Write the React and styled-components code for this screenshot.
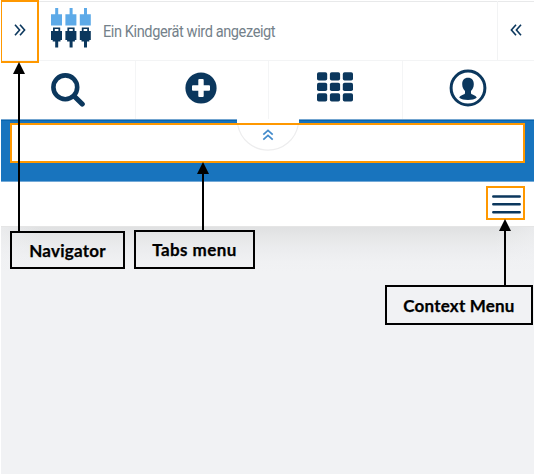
import React from "react";
import styled, { createGlobalStyle } from "styled-components";

const NAVY = "#0b375d";
const ORANGE = "#ff9800";

const GlobalStyle = createGlobalStyle`
  *, *::before, *::after { box-sizing: border-box; }
  body { margin: 0; background: #f1f2f4; }
  svg { display: block; flex: none; }
`;

const Screen = styled.main`
  position: relative;
  width: 534px;
  height: 474px;
  overflow: hidden;
  background: #f1f2f4;
  border-left: 1px solid #fff;
  display: flex;
  flex-direction: column;
`;

const Header = styled.header`
  height: 60px;
  flex: none;
  display: flex;
  align-items: stretch;
  background: #fff;
  border-top: 1px solid #fff;
  box-shadow: inset 0 1px #e8e9ea;
`;

const SideToggle = styled.button`
  width: ${(p) => p.$width}px;
  padding: 0 0 ${(p) => p.$lift || 0}px;
  border: 0;
  border-left: ${(p) => (p.$divided ? "1px solid #f2f3f4" : "0")};
  background: transparent;
  display: flex;
  align-items: center;
  justify-content: center;
`;

const Device = styled.div`
  flex: 1;
  display: flex;
  align-items: center;
  padding: 0 0 5px 12px;
  gap: 12px;
`;

const DeviceTitle = styled.span`
  font: 400 16px/20px Roboto, sans-serif;
  letter-spacing: -0.45px;
  color: #74818a;
  white-space: nowrap;
  padding-top: 8px;
  transform: scaleX(0.911);
  transform-origin: left;
`;

const Toolbar = styled.nav`
  height: 59px;
  flex: none;
  display: grid;
  grid-template-columns: 135px 133px 134px 1fr;
  background: #fff;
  border-top: 1px solid #f3f4f5;
`;

const Tool = styled.button`
  border: 0;
  border-right: ${(p) => (p.$last ? "0" : "1px solid #f4f5f6")};
  padding: 0 ${(p) => p.$shift || 0}px ${(p) => p.$lift || 0}px 0;
  background: transparent;
  display: flex;
  align-items: center;
  justify-content: center;
`;

const TabsBand = styled.section`
  height: 63px;
  flex: none;
  position: relative;
  padding: 3px 9px 0;
  background: #1874be;
  border-top: 1px solid #73a5d0;
  border-bottom: 1px solid #73a9d7;
  box-shadow: inset 0 1px #0965ae;
`;

const TabsPanel = styled.div`
  height: 40px;
  width: 515px;
  border: 2px solid ${ORANGE};
  background: #fff;
`;

const Collapse = styled.div`
  position: absolute;
  left: 236px;
  top: -1px;
  width: 62px;
  height: 33px;
`;

const ContextBar = styled.section`
  height: 44px;
  flex: none;
  display: flex;
  justify-content: flex-end;
  padding: 4px 9px 0 0;
  background: #fff;
`;

const MenuButton = styled.button`
  width: 39px;
  height: 34px;
  border: 2px solid ${ORANGE};
  background: #fff;
  padding: 0 0 0 4px;
  display: flex;
  align-items: flex-start;

  svg { margin-top: 6px; }
`;

const Content = styled.section`
  flex: 1;
  background:
    linear-gradient(90deg, rgba(241, 242, 244, 0.55), rgba(241, 242, 244, 0) 40px, rgba(241, 242, 244, 0) 493px, rgba(241, 242, 244, 0.55)),
    linear-gradient(#dfe0e1 0, #e5e6e7 10px, #ebecee 22px, #f0f1f3 36px, #f1f2f4 46px);
  box-shadow: inset 0 1px #e5e5e5;
`;

const NavigatorFrame = styled.div`
  position: absolute;
  left: -1px;
  top: 0;
  width: 39px;
  height: 63px;
  border: 2px solid ${ORANGE};
`;

const Annotation = styled.div`
  position: absolute;
  left: ${(p) => p.$x - 1}px;
  top: ${(p) => p.$y}px;
  width: ${(p) => p.$w}px;
  height: ${(p) => p.$h}px;
  border: 2px solid #000;
  display: flex;
  align-items: center;
  justify-content: center;
  padding-top: 1px;
  font: 700 17px/20px Lato, sans-serif;
  letter-spacing: ${(p) => p.$tracking || 0}px;
  -webkit-text-stroke: 0.25px #000;
  color: #000;
  white-space: nowrap;
`;

const Arrow = styled.svg`
  position: absolute;
  left: ${(p) => p.$x - 7}px;
  top: ${(p) => p.$y}px;
`;

function Pointer({ x, y, length }) {
  return (
    <Arrow $x={x} $y={y} width="12" height={length} viewBox={`0 0 12 ${length}`}>
      <path d="M6 0L12 12H0Z" />
      <path d={`M6 10V${length}`} stroke="#000" strokeWidth="2" />
    </Arrow>
  );
}

function Chevrons({ flip }) {
  return (
    <svg width="12" height="12" viewBox="0 0 12 12" fill="none" stroke={NAVY} strokeWidth="1.6">
      <g transform={flip ? "translate(12 0) scale(-1 1)" : undefined}>
        <path d="M1 .7L5.6 6L1 11.3M6 .7L10.6 6L6 11.3" />
      </g>
    </svg>
  );
}

function PlugsIcon() {
  return (
    <svg width="40" height="40" viewBox="0 0 40 40">
      {[0, 14.4, 28.8].map((x) => (
        <g key={x} transform={`translate(${x} 0)`}>
          <path d="M4.2 0h3v6.2H11V17.5H0V6.2h4.2z" fill="#5daae8" />
          <path
            d="M2 19.5h7.2V23H11v9H9.5v1.5H7.2V39.5h-3V33.5H1.7V32H0v-9h2zM3.8 21v2h3.6v-2z"
            fill={NAVY}
            fillRule="evenodd"
          />
        </g>
      ))}
    </svg>
  );
}

export default function App() {
  return (
    <>
      <GlobalStyle />
      <Screen>
        <Header>
          <SideToggle $width={38} $lift={2} aria-label="Navigator">
            <Chevrons />
          </SideToggle>
          <Device>
            <PlugsIcon />
            <DeviceTitle>Ein Kindgerät wird angezeigt</DeviceTitle>
          </Device>
          <SideToggle $width={37} $lift={2} $divided aria-label="Details">
            <Chevrons flip />
          </SideToggle>
        </Header>

        <Toolbar>
          <Tool $lift={1} aria-label="Search">
            <svg width="34" height="34" viewBox="0 0 34 34" fill="none" stroke={NAVY}>
              <circle cx="14.3" cy="14.3" r="11.9" strokeWidth="4.6" />
              <path d="M23.5 23.5L31.2 31" strokeWidth="5.2" strokeLinecap="round" />
            </svg>
          </Tool>
          <Tool $lift={4} $shift={2} aria-label="Add">
            <svg width="32" height="32" viewBox="0 0 32 32">
              <circle cx="16" cy="16" r="15.6" fill={NAVY} />
              <path
                d="M14.3 7h3.4q1 0 1 1v5.3H24q1 0 1 1v3.4q0 1-1 1h-5.3V24q0 1-1 1h-3.4q-1 0-1-1v-5.3H8q-1 0-1-1v-3.4q0-1 1-1h5.3V8q0-1 1-1z"
                fill="#fff"
              />
            </svg>
          </Tool>
          <Tool $lift={6} $shift={2} aria-label="Apps">
            <svg width="36" height="30" viewBox="0 0 36 30" fill={NAVY}>
              {[0, 10.5, 21].map((y) =>
                [0, 12.9, 25.8].map((x) => (
                  <rect key={`${x}-${y}`} x={x} y={y + 0.2} width="10.2" height="8.3" rx="1.8" />
                ))
              )}
            </svg>
          </Tool>
          <Tool $last $lift={4} $shift={1} aria-label="Account">
            <svg width="38" height="38" viewBox="0 0 38 38">
              <circle cx="19" cy="19" r="16.9" fill="none" stroke={NAVY} strokeWidth="3" />
              <path
                d="M19 8.8c3.9 0 5.8 2.5 5.8 6.5 0 3.2-1.4 5-2.8 6.7v2.3c0 1.7 5 1.4 5.7 4.5-2 1.6-5.1 2.2-8.7 2.2s-6.7-.6-8.7-2.2c.7-3.1 5.7-2.8 5.7-4.5V22c-1.4-1.7-2.8-3.5-2.8-6.7 0-4 1.9-6.5 5.8-6.5z"
                fill={NAVY}
              />
            </svg>
          </Tool>
        </Toolbar>

        <TabsBand>
          <TabsPanel />
          <Collapse>
            <svg width="62" height="33" viewBox="0 0 62 33">
              <path d="M0 0H62V4H0Z" fill="#fff" />
              <path d="M0 4H62V6H0Z" fill={ORANGE} />
              <path d="M.8 6A30.7 30.7 0 0 0 61.2 6" fill="none" stroke="#ededee" strokeWidth="1.3" />
              <path
                d="M26.3 15.6L31 11.3L35.7 15.6M26.3 20.6L31 16.3L35.7 20.6"
                fill="none"
                stroke="#438bcb"
                strokeWidth="1.7"
              />
            </svg>
          </Collapse>
        </TabsBand>

        <ContextBar>
          <MenuButton aria-label="Context Menu">
            <svg width="29" height="20" viewBox="0 0 29 20" stroke={NAVY} strokeWidth="2.5" strokeLinecap="round">
              <path d="M1.3 2.5H27.7M1.3 10.3H27.7M1.3 18.2H27.7" />
            </svg>
          </MenuButton>
        </ContextBar>
        <Content />

        <NavigatorFrame />
        <Annotation $x={10} $y={231} $w={115} $h={38} $tracking={0.25}>Navigator</Annotation>
        <Annotation $x={134} $y={230} $w={121} $h={39} $tracking={0.45}>Tabs menu</Annotation>
        <Annotation $x={385} $y={285} $w={148} $h={40} $tracking={0.2}>Context Menu</Annotation>
        <Pointer x={19} y={62} length={170} />
        <Pointer x={203} y={162} length={69} />
        <Pointer x={505} y={219} length={67} />
      </Screen>
    </>
  );
}
